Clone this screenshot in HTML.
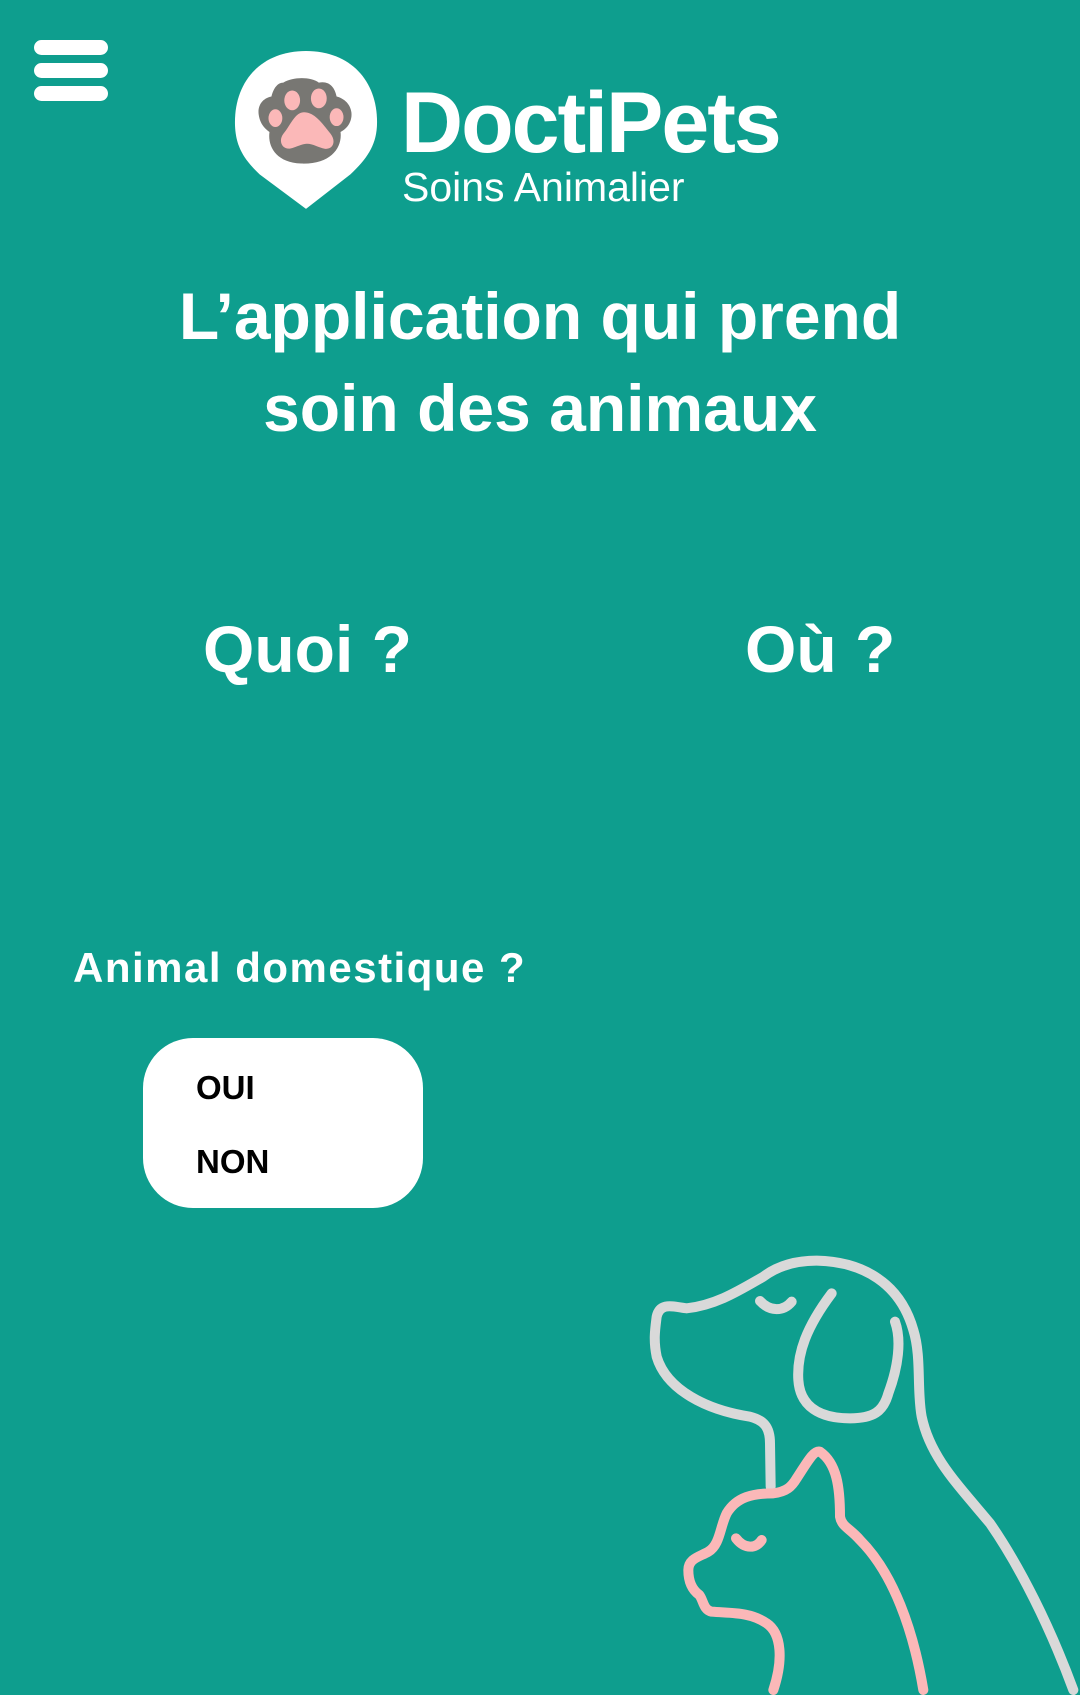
<!DOCTYPE html>
<html><head><meta charset="utf-8"><style>
html,body{margin:0;padding:0}
body{width:1080px;height:1695px;background:#0e9e8e;position:relative;overflow:hidden;font-family:"Liberation Sans",sans-serif;color:#fff}
.t{position:absolute;white-space:nowrap;font-weight:bold}
.bar{position:absolute;left:34px;width:74px;height:15px;background:#fff;border-radius:8px}
</style></head><body>
<div class="bar" style="top:40px"></div>
<div class="bar" style="top:63px"></div>
<div class="bar" style="top:86px"></div>

<svg style="position:absolute;left:232px;top:48px" width="148" height="162" viewBox="0 0 150 162">
<path d="M75 2 C30 2 3 32 3 74 C3 96 10 110 28 127 L75 162 L120 127 C138 110 147 96 147 74 C147 32 120 2 75 2Z" fill="#fff"/>
<path d="M52 34 C46 34 42 40 40 48 C30 50 26 58 27 66 C28 74 32 80 38 84 C36 98 44 115 70 116 C100 117 112 100 110 84 C118 80 122 72 121 64 C120 56 114 50 106 48 C104 38 98 32 88 34 C80 28 62 28 52 34Z" fill="#787773"/>
<ellipse cx="61" cy="52" rx="8" ry="10" fill="#fbb8b8"/>
<ellipse cx="88" cy="50" rx="8" ry="10" fill="#fbb8b8"/>
<ellipse cx="44" cy="70" rx="7" ry="9" fill="#fbb8b8"/>
<ellipse cx="106" cy="69" rx="7" ry="9" fill="#fbb8b8"/>
<path d="M73 64 C64 64 60 76 52 86 C46 94 52 104 62 100 C68 98 72 96 76 96 C82 96 88 100 94 101 C102 102 106 94 100 86 C92 76 84 64 73 64Z" fill="#fbb8b8"/>
</svg>

<div class="t" style="left:401px;top:80px;font-size:86px;letter-spacing:-2px;line-height:1">DoctiPets</div>
<div class="t" style="left:402px;top:167px;font-size:41px;font-weight:normal;line-height:1">Soins Animalier</div>

<div class="t" style="left:0;width:1080px;text-align:center;top:280px;font-size:66px;line-height:72px">L’application qui prend</div>
<div class="t" style="left:0;width:1080px;text-align:center;top:372px;font-size:66px;line-height:72px">soin des animaux</div>

<div class="t" style="left:203px;top:614px;font-size:66px;line-height:70px">Quoi ?</div>
<div class="t" style="left:745px;top:614px;font-size:66px;line-height:70px">Où ?</div>

<div class="t" style="left:73px;top:944px;font-size:42px;letter-spacing:1.5px;line-height:48px">Animal domestique ?</div>

<div style="position:absolute;left:143px;top:1038px;width:280px;height:170px;background:#fff;border-radius:50px"></div>
<div class="t" style="left:196px;top:1070px;font-size:33px;color:#000;line-height:36px">OUI</div>
<div class="t" style="left:196px;top:1144px;font-size:33px;color:#000;line-height:36px">NON</div>

<svg style="position:absolute;left:620px;top:1230px" width="460" height="465" viewBox="0 0 1380 1395">
<g fill="none" stroke-width="30" stroke-linecap="round" stroke-linejoin="round">
<path stroke="#d9d9d9" d="M1360 1380 C1290 1190 1200 1010 1110 880 C1010 760 930 680 905 560 C890 480 905 380 880 300 C840 160 730 95 590 92 C520 92 470 110 430 140 C360 180 290 225 200 235 C160 230 120 215 110 260 C105 300 100 330 110 380 C140 480 260 540 390 560 C430 570 450 590 450 640 L452 770"/>
<path stroke="#d9d9d9" d="M420 213 C450 245 490 245 515 215"/>
<path stroke="#d9d9d9" d="M635 190 C560 290 530 370 535 450 C540 530 600 565 690 565 C760 565 790 545 805 490 C835 410 845 330 825 275"/>
<path stroke="#fbb8b8" d="M460 1380 C490 1290 485 1210 440 1180 C390 1145 330 1150 275 1145 C250 1140 250 1110 238 1095 C210 1075 205 1045 205 1020 C205 985 240 980 265 965 C300 945 300 890 320 850 C350 800 400 790 460 790 C500 785 515 770 530 745 C560 700 580 660 600 665 C650 700 660 770 660 860 C665 890 690 895 720 930 C820 1030 880 1200 910 1380"/>
<path stroke="#fbb8b8" d="M348 925 C375 960 410 955 425 930"/>
</g></svg>
</body></html>
